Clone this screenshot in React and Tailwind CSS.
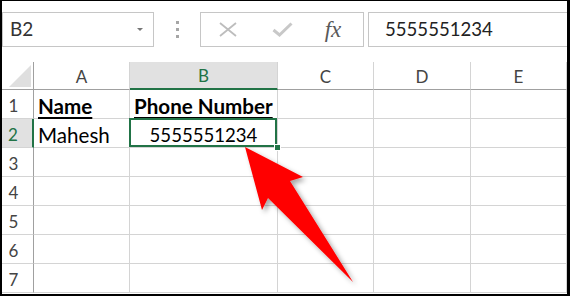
import React from "react";

const COLS = ["A", "B", "C", "D", "E"];
const ROWS = [1, 2, 3, 4, 5, 6, 7];

const cells = {
  "A1": { text: "Name", bold: true },
  "B1": { text: "Phone Number", bold: true },
  "A2": { text: "Mahesh" },
  "B2": { text: "5555551234", center: true, num: true },
};

function NameBox() {
  return (
    <div className="w-[152px] h-[35px] border border-[#c6c6c6] flex items-center justify-between pl-[7px] pr-[10px]">
      <span className="text-[19px] text-[#333]">B2</span>
      <span className="w-0 h-0 border-l-[3px] border-r-[3px] border-t-[3px] border-l-transparent border-r-transparent border-t-[#777]" />
    </div>
  );
}

function FormulaButtons() {
  return (
    <div className="w-[164px] h-[35px] border border-[#c6c6c6] grid grid-cols-3 items-center">
      <div className="flex justify-center">
        <svg width="18" height="15" viewBox="0 0 18 15">
          <path d="M1 1 L17 14 M17 1 L1 14" stroke="#bdbdbd" strokeWidth="1.8" fill="none" />
        </svg>
      </div>
      <div className="flex justify-center">
        <svg width="21" height="15" viewBox="0 0 21 15">
          <path d="M1.5 8 L7.5 13 L19.5 1.5" stroke="#c8c8c8" strokeWidth="3" fill="none" />
        </svg>
      </div>
      <div className="flex justify-center pr-[6px]">
        <span className="italic text-[23px] leading-none text-[#595959] font-['Liberation_Serif',serif]">fx</span>
      </div>
    </div>
  );
}

export default function App() {
  return (
    <div className="relative w-[570px] h-[296px] bg-white border-t border-l-2 border-r-[3px] border-b-2 border-black font-['Lato',sans-serif] overflow-hidden">
      {/* Formula bar */}
      <div className="h-[61px] flex items-start pt-[11px]">
        <NameBox />
        <div className="w-[46px] h-[35px] flex flex-col items-center justify-center gap-[4px]">
          <span className="w-[3px] h-[3px] bg-[#a6a6a6]" />
          <span className="w-[3px] h-[3px] bg-[#a6a6a6]" />
          <span className="w-[3px] h-[3px] bg-[#a6a6a6]" />
        </div>
        <FormulaButtons />
        <div className="ml-[4px] flex-1 h-[35px] border-t border-b border-l border-[#c6c6c6] flex items-center pl-4">
          <span className="text-[18.6px] text-[#222]">5555551234</span>
        </div>
      </div>

      {/* Sheet */}
      <div className="grid grid-cols-[32px_96px_148px_96px_97px_96px] grid-rows-[28px_repeat(7,29px)]">
        <div className="border-r border-b border-[#a0a0a0] flex items-end justify-end pr-[2px] pb-[2px]">
          <svg width="22" height="22" viewBox="0 0 22 22">
            <polygon points="22,0 22,22 0,22" fill="#dfdfdf" />
          </svg>
        </div>
        {COLS.map((c) =>
          c === "B" ? (
            <div key={c} className="bg-[#e1e1e1] border-r border-[#d4d4d4] border-b-2 border-b-[#217346] flex items-center justify-center pt-[2px] text-[17px] text-[#217346]">
              {c}
            </div>
          ) : (
            <div key={c} className="border-r border-[#d4d4d4] border-b border-b-[#a0a0a0] flex items-center justify-center pt-[2px] text-[17px] text-[#444]">
              {c}
            </div>
          )
        )}
        {ROWS.map((r) => (
          <React.Fragment key={r}>
            {r === 2 ? (
              <div className="bg-[#e1e1e1] border-r-2 border-[#217346] border-b border-b-[#d4d4d4] flex items-center justify-center pr-[8px] pt-[3px] text-[17px] text-[#217346]">
                {r}
              </div>
            ) : (
              <div className="border-r border-[#a0a0a0] border-b border-b-[#d4d4d4] flex items-center justify-center pr-[8px] pt-[3px] text-[17px] text-[#444]">
                {r}
              </div>
            )}
            {COLS.map((c) => {
              const cell = cells[c + r];
              const selected = c === "B" && r === 2;
              return (
                <div key={c} className={`relative border-r border-b border-[#d4d4d4] flex items-end ${cell?.center ? "justify-center" : "pl-[4px]"}`}>
                  {cell && (
                    <span className={`${cell.num ? "text-[18.6px]" : "text-[20.6px]"} leading-[24px] text-black whitespace-nowrap ${cell.bold ? "font-bold underline underline-offset-[3px] decoration-[2px]" : ""}`}>
                      {cell.text}
                    </span>
                  )}
                  {selected && (
                    <>
                      <div className="absolute -left-[1px] -top-[1px] right-0 bottom-0 border-2 border-[#217346]" />
                      <div className="absolute z-10 -right-[4px] -bottom-[4px] w-[7px] h-[7px] bg-[#217346] border border-white" />
                    </>
                  )}
                </div>
              );
            })}
          </React.Fragment>
        ))}
      </div>

      {/* Red arrow callout */}
      <svg className="absolute left-[-2px] top-[-1px] pointer-events-none" width="570" height="296" viewBox="0 0 570 296">
        <defs>
          <filter id="sh" x="-20%" y="-20%" width="140%" height="140%">
            <feDropShadow dx="3" dy="3" stdDeviation="2.5" floodColor="#000" floodOpacity="0.35" />
          </filter>
        </defs>
        <polygon
          points="245,147 303,177 290,181 353,282 268,198 262,210"
          fill="#ff0000"
          filter="url(#sh)"
        />
      </svg>
    </div>
  );
}
